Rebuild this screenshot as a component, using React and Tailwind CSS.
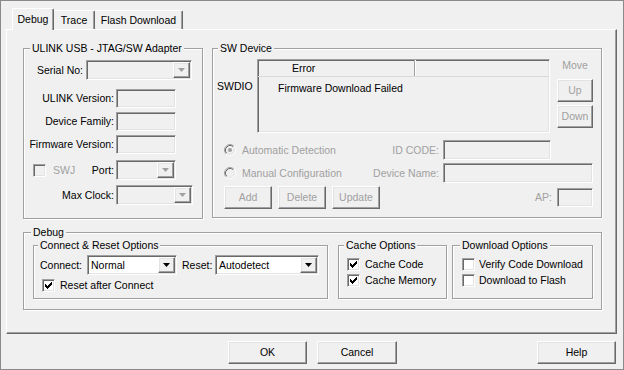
import React from "react";

const raised =
  "border border-t-white border-l-white border-r-[#696969] border-b-[#696969] shadow-[inset_-1px_-1px_0_#a0a0a0,inset_1px_1px_0_#e3e3e3]";
const sunken =
  "border border-t-[#a0a0a0] border-l-[#a0a0a0] border-r-white border-b-white shadow-[inset_1px_1px_0_#696969,inset_-1px_-1px_0_#e3e3e3]";
const etched = "border border-[#a0a0a0] shadow-[inset_1px_1px_0_#fff,1px_1px_0_#fff]";
const gray = "text-[#a0a0a0]";

function Group({ title, className = "", titleClass = "", children }) {
  return (
    <div className={`${etched} ${className}`}>
      <div className={`-mt-[7px] w-fit px-[2px] bg-[#f0f0f0] leading-[13px] whitespace-nowrap ${titleClass}`}>
        {title}
      </div>
      {children}
    </div>
  );
}

function Arrow({ disabled }) {
  return (
    <svg width="7" height="4" viewBox="0 0 7 4">
      <path d="M0 0H7L3.5 4Z" fill={disabled ? "#a0a0a0" : "#000"} />
    </svg>
  );
}

function Combo({ w, value = "", disabled = false }) {
  return (
    <div className={`${sunken} flex h-[20px] ${w} ${disabled ? "bg-[#f0f0f0]" : "bg-white"}`}>
      <div className="flex-1 pl-[3px] leading-[18px] whitespace-nowrap overflow-hidden">{value}</div>
      <div className={`${raised} w-[17px] my-[1px] mr-[1px] flex items-center justify-center bg-[#f0f0f0]`}>
        <Arrow disabled={disabled} />
      </div>
    </div>
  );
}

function TextBox({ w, h = "h-[19px]" }) {
  return <div className={`${sunken} bg-[#f0f0f0] ${h} ${w}`} />;
}

function Check({ checked = false, disabled = false }) {
  return (
    <div
      className={`${sunken} w-[13px] h-[13px] shrink-0 flex items-center justify-center ${
        disabled ? "bg-[#f0f0f0]" : "bg-white"
      }`}
    >
      {checked && (
        <svg width="7" height="7" viewBox="0 0 7 7" shapeRendering="crispEdges">
          <g fill="#000">
            <rect x="0" y="2" width="1" height="3" />
            <rect x="1" y="3" width="1" height="3" />
            <rect x="2" y="4" width="1" height="3" />
            <rect x="3" y="3" width="1" height="3" />
            <rect x="4" y="2" width="1" height="3" />
            <rect x="5" y="1" width="1" height="3" />
            <rect x="6" y="0" width="1" height="3" />
          </g>
        </svg>
      )}
    </div>
  );
}

function Radio({ checked = false }) {
  return (
    <svg width="12" height="12" viewBox="0 0 12 12" className="shrink-0">
      <circle cx="6" cy="6" r="5" fill="#f0f0f0" />
      <path d="M2.11 9.89A5.5 5.5 0 0 1 9.89 2.11" fill="none" stroke="#a0a0a0" strokeWidth="1" />
      <path d="M9.89 2.11A5.5 5.5 0 0 1 2.11 9.89" fill="none" stroke="#ffffff" strokeWidth="1" />
      <path d="M2.82 9.18A4.5 4.5 0 0 1 9.18 2.82" fill="none" stroke="#696969" strokeWidth="1" />
      <path d="M9.18 2.82A4.5 4.5 0 0 1 2.82 9.18" fill="none" stroke="#e3e3e3" strokeWidth="1" />
      {checked && <circle cx="6" cy="6" r="2" fill="#a0a0a0" />}
    </svg>
  );
}

function Btn({ children, className = "", disabled = false }) {
  return (
    <button
      type="button"
      className={`${raised} bg-[#f0f0f0] flex items-center justify-center leading-[13px] ${
        disabled ? gray : "text-black"
      } ${className}`}
    >
      {children}
    </button>
  );
}

export default function App() {
  return (
    <div className="w-[624px] h-[370px] bg-[#f0f0f0] border border-[#8a8a8a] flex flex-col text-[10.5px] leading-[13px] text-black font-['Liberation_Sans',Arial,sans-serif] overflow-hidden">
      {/* tabs */}
      <div className="flex items-end h-[28px] pl-[11px] shrink-0">
        <div className="relative z-10 -mb-[1px] w-[42px] h-[22px] bg-[#f0f0f0] border-t border-l border-r border-t-white border-l-white border-r-[#696969] shadow-[inset_-1px_0_0_#a0a0a0] rounded-t-[2px] flex items-center justify-center pb-[1px]">
          Debug
        </div>
        <div className="w-[41px] h-[19px] border-t border-r border-t-white border-r-[#696969] shadow-[inset_-1px_0_0_#a0a0a0] rounded-tr-[2px] flex items-center justify-center">
          Trace
        </div>
        <div className="w-[88px] h-[19px] border-t border-r border-t-white border-r-[#696969] shadow-[inset_-1px_0_0_#a0a0a0] rounded-tr-[2px] flex items-center justify-center">
          Flash Download
        </div>
      </div>

      {/* panel */}
      <div className="ml-[5px] w-[611px] h-[305px] shrink-0 border border-t-white border-l-white border-r-[#696969] border-b-[#696969] shadow-[inset_-1px_-1px_0_#a0a0a0] pt-[18px] pl-[16px]">
        <div className="flex items-start">
          {/* ULINK group */}
          <Group title="ULINK USB - JTAG/SW Adapter" className="w-[180px] h-[171px]" titleClass="ml-[6px]">
            <div className="flex items-center h-[20px] mt-[5px]">
              <div className="w-[59px] text-right">Serial No:</div>
              <div className="ml-[3px]">
                <Combo w="w-[106px]" disabled />
              </div>
            </div>
            <div className="flex items-center h-[19px] mt-[9px]">
              <div className="w-[90px] text-right">ULINK Version:</div>
              <div className="ml-[2px]">
                <TextBox w="w-[60px]" />
              </div>
            </div>
            <div className="flex items-center h-[19px] mt-[4px]">
              <div className="w-[90px] text-right">Device Family:</div>
              <div className="ml-[2px]">
                <TextBox w="w-[60px]" />
              </div>
            </div>
            <div className="flex items-center h-[19px] mt-[4px]">
              <div className="w-[90px] text-right whitespace-nowrap">Firmware Version:</div>
              <div className="ml-[2px]">
                <TextBox w="w-[60px]" />
              </div>
            </div>
            <div className="flex items-center h-[20px] mt-[6px]">
              <div className="w-[67px] flex items-center">
                <div className="ml-[9px]">
                  <Check disabled />
                </div>
                <span className={`ml-[7px] ${gray}`}>SWJ</span>
              </div>
              <div className="w-[23px] text-right">Port:</div>
              <div className="ml-[2px]">
                <Combo w="w-[60px]" disabled />
              </div>
            </div>
            <div className="flex items-center h-[20px] mt-[5px]">
              <div className="w-[90px] text-right">Max Clock:</div>
              <div className="ml-[2px]">
                <Combo w="w-[77px]" disabled />
              </div>
            </div>
          </Group>

          {/* SW Device group */}
          <Group title="SW Device" className="ml-[9px] w-[390px] h-[170px]" titleClass="ml-[5px]">
            <div className="flex items-start mt-[4px]">
              <div className="w-[44px] pl-[4px] pt-[21px]">SWDIO</div>
              <div className={`${sunken} w-[293px] h-[74px] bg-[#f0f0f0] flex flex-col`}>
                <div className="flex h-[17px] shrink-0 border-b border-b-[#d9d9d9]">
                  <div className="w-[157px] pl-[34px] leading-[16px] border-r border-r-[#a0a0a0]">Error</div>
                  <div className="flex-1 border-l border-l-white" />
                </div>
                <div className="mt-[3px] pl-[20px] leading-[16px] whitespace-nowrap">Firmware Download Failed</div>
              </div>
              <div className="ml-[7px] w-[36px] flex flex-col items-center">
                <div className={gray}>Move</div>
                <Btn className="mt-[7px] w-[36px] h-[23px]" disabled>
                  Up
                </Btn>
                <Btn className="mt-[3px] w-[36px] h-[23px]" disabled>
                  Down
                </Btn>
              </div>
            </div>
            <div className="flex items-center h-[20px] mt-[7px]">
              <div className="w-[156px] flex items-center pl-[11px]">
                <Radio checked />
                <span className={`ml-[6px] whitespace-nowrap ${gray}`}>Automatic Detection</span>
              </div>
              <div className={`w-[70px] text-right ${gray}`}>ID CODE:</div>
              <div className="ml-[4px]">
                <TextBox w="w-[108px]" h="h-[20px]" />
              </div>
            </div>
            <div className="flex items-center h-[20px] mt-[3px]">
              <div className="w-[156px] flex items-center pl-[11px]">
                <Radio />
                <span className={`ml-[6px] whitespace-nowrap ${gray}`}>Manual Configuration</span>
              </div>
              <div className={`w-[70px] text-right whitespace-nowrap ${gray}`}>Device Name:</div>
              <div className="ml-[4px]">
                <TextBox w="w-[150px]" h="h-[20px]" />
              </div>
            </div>
            <div className="flex items-center h-[23px] mt-[3px]">
              <Btn className="ml-[11px] w-[48px] h-[23px]" disabled>
                Add
              </Btn>
              <Btn className="ml-[6px] w-[48px] h-[23px]" disabled>
                Delete
              </Btn>
              <Btn className="ml-[6px] w-[48px] h-[23px]" disabled>
                Update
              </Btn>
              <div className={`w-[172px] text-right ${gray}`}>AP:</div>
              <div className="ml-[5px]">
                <TextBox w="w-[36px]" />
              </div>
            </div>
          </Group>
        </div>

        {/* Debug group */}
        <Group title="Debug" className="mt-[13px] w-[579px] h-[78px]" titleClass="ml-[7px]">
          <div className="flex mt-[6px] ml-[9px]">
            <Group title="Connect & Reset Options" className="w-[295px] h-[54px]" titleClass="ml-[4px]">
              <div className="flex items-center h-[20px] mt-[3px]">
                <div className="ml-[6px] w-[47px]">Connect:</div>
                <Combo w="w-[90px]" value="Normal" />
                <div className="ml-[5px] w-[33px]">Reset:</div>
                <Combo w="w-[104px]" value="Autodetect" />
              </div>
              <div className="flex items-center mt-[4px] h-[13px]">
                <div className="ml-[8px]">
                  <Check checked />
                </div>
                <span className="ml-[5px] whitespace-nowrap">Reset after Connect</span>
              </div>
            </Group>
            <Group title="Cache Options" className="ml-[10px] w-[109px] h-[54px]" titleClass="ml-[5px]">
              <div className="flex items-center mt-[6px] h-[13px]">
                <div className="ml-[8px]">
                  <Check checked />
                </div>
                <span className="ml-[5px] whitespace-nowrap">Cache Code</span>
              </div>
              <div className="flex items-center mt-[3px] h-[13px]">
                <div className="ml-[8px]">
                  <Check checked />
                </div>
                <span className="ml-[5px] whitespace-nowrap">Cache Memory</span>
              </div>
            </Group>
            <Group title="Download Options" className="ml-[5px] w-[141px] h-[54px]" titleClass="ml-[7px]">
              <div className="flex items-center mt-[6px] h-[13px]">
                <div className="ml-[9px]">
                  <Check />
                </div>
                <span className="ml-[4px] whitespace-nowrap">Verify Code Download</span>
              </div>
              <div className="flex items-center mt-[3px] h-[13px]">
                <div className="ml-[9px]">
                  <Check />
                </div>
                <span className="ml-[4px] whitespace-nowrap">Download to Flash</span>
              </div>
            </Group>
          </div>
        </Group>
      </div>

      {/* bottom buttons */}
      <div className="flex mt-[7px] shrink-0">
        <Btn className="ml-[227px] w-[79px] h-[23px]">OK</Btn>
        <Btn className="ml-[10px] w-[80px] h-[23px]">Cancel</Btn>
        <Btn className="ml-[140px] w-[79px] h-[23px]">Help</Btn>
      </div>
    </div>
  );
}
